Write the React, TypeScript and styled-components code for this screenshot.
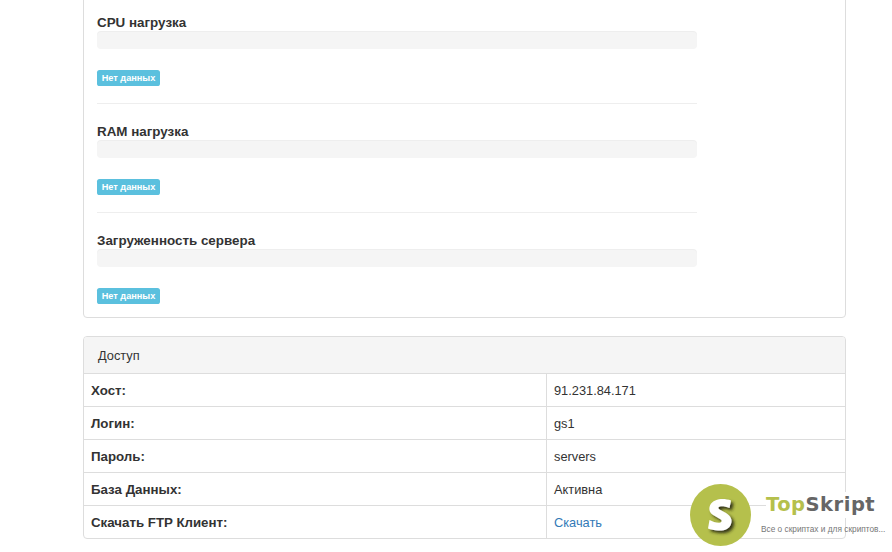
import React from "react";
import styled, { createGlobalStyle } from "styled-components";

const Global = createGlobalStyle`
  html, body { margin: 0; padding: 0; background: #fff; overflow: hidden; }
  body { font-family: "Liberation Sans", Arial, sans-serif; font-size: 12.8px; line-height: 20px; color: #333; }
  * { box-sizing: border-box; }
`;
const Page = styled.div`
  position: relative;
  width: 892px;
  height: 552px;
  overflow: hidden;
  padding: 0 46px 0 83px;
  display: flex;
  flex-direction: column;
  gap: 18px;
`;
const Panel = styled.section`
  background: #fff;
  border: 1px solid #ddd;
  border-radius: 4px;
`;
const LoadPanel = styled(Panel)`
  margin-top: -11px;
  padding: 22px 13px 13px;
  width: 763px;
`;
const Metric = styled.div`
  width: 600px;
`;
const MetricTitle = styled.h4`
  margin: 0;
  font-size: 13.4px;
  line-height: 22px;
  height: 19px;
  font-weight: 700;
  color: #333;
`;
const Track = styled.div`
  height: 18px;
  background: #f5f5f5;
  border-radius: 4px;
  box-shadow: inset 0 1px 1px rgba(0,0,0,.03);
  margin-bottom: 21px;
`;
const Badge = styled.span`
  display: block;
  width: 63px;
  height: 16px;
  background: #5bc0de;
  border-radius: 2.6px;
  color: #fff;
  font-size: 9.2px;
  line-height: 16px;
  font-weight: 700;
  text-align: center;
  white-space: nowrap;
`;
const Rule = styled.hr`
  border: 0;
  border-top: 1px solid #eee;
  margin: 17px 0 17px;
`;
const AccessPanel = styled(Panel)`
  width: 763px;
  overflow: hidden;
`;
const Heading = styled.header`
  height: 37px;
  padding: 0 14px;
  background: #f5f5f5;
  border-bottom: 1px solid #ddd;
  line-height: 37px;
  color: #333;
`;
const Row = styled.div`
  display: grid;
  grid-template-columns: 462px 1fr;
  height: 33px;
  border-bottom: 1px solid #ddd;
  &:last-child { height: 32px; border-bottom: 0; }
`;
const KeyCell = styled.div`
  padding: 0 7px;
  font-size: 13.3px;
  font-weight: 700;
  line-height: 34px;
`;
const ValueCell = styled.div`
  padding: 0 7px;
  border-left: 1px solid #ddd;
  line-height: 34px;
`;
const Link = styled.a`
  color: #337ab7;
  text-decoration: none;
`;
const Watermark = styled.div`
  position: absolute;
  left: 690px;
  top: 484px;
  width: 200px;
  height: 62px;
  display: flex;
`;
const Brand = styled.div`
  display: flex;
  flex-direction: column;
  margin-left: 15px;
  padding-top: 8px;
`;
const BrandName = styled.div`
  font-family: "DejaVu Sans", sans-serif;
  font-size: 19.5px;
  line-height: 26px;
  width: 112px;
  font-weight: 700;
  letter-spacing: 0.5px;
  color: #666;
  background: #fff;
  white-space: nowrap;
  & > b { color: #b5c04c; }
`;
const Tagline = styled.div`
  font-size: 8.3px;
  line-height: 12px;
  margin: 5px 0 0 -5px;
  color: #777;
  white-space: nowrap;
`;

const metrics = ["CPU нагрузка", "RAM нагрузка", "Загруженность сервера"];
const rows: [string, React.ReactNode][] = [
  ["Хост:", "91.231.84.171"],
  ["Логин:", "gs1"],
  ["Пароль:", "servers"],
  ["База Данных:", "Активна"],
  ["Скачать FTP Клиент:", <Link href="#">Скачать</Link>],
];

const App = () => (
  <Page>
    <Global />
    <LoadPanel>
      {metrics.map((m, i) => (
        <Metric key={m}>
          {i > 0 && <Rule />}
          <MetricTitle>{m}</MetricTitle>
          <Track />
          <Badge>Нет данных</Badge>
        </Metric>
      ))}
    </LoadPanel>
    <AccessPanel>
      <Heading>Доступ</Heading>
      {rows.map(([k, v]) => (
        <Row key={k}>
          <KeyCell>{k}</KeyCell>
          <ValueCell>{v}</ValueCell>
        </Row>
      ))}
    </AccessPanel>
    <Watermark>
      <svg width="61" height="62" viewBox="0 0 61 62">
        <defs>
          <filter id="s" x="-30%" y="-30%" width="170%" height="170%">
            <feDropShadow dx="2.5" dy="2.5" stdDeviation="1.6" floodColor="#23230c" floodOpacity="0.9" />
          </filter>
        </defs>
        <ellipse cx="30.5" cy="31" rx="30.5" ry="31" fill="#b5c04c" />
        <path filter="url(#s)" d="M41 16.5 L39.5 24 C36 22.5 32 22 30 22.5 C28 23 27.8 24.5 29.5 25.5 L36 29 C41 32 42.5 36 41 40 C39.5 45 34 47 28 46.5 C24.5 46.3 20.5 45.5 18 44.5 L19.5 36 C23 38 28 39.5 30.5 38.5 C32.3 37.8 32 36 30 35 L24 31.5 C19.5 29 18.5 25 20 21.5 C22 16.5 28 15 32.5 15 C35.5 15 38.5 15.5 41 16.5 Z" fill="#fff" />
      </svg>
      <Brand>
        <BrandName><b>Top</b>Skript</BrandName>
        <Tagline>Все о скриптах и для скриптов...</Tagline>
      </Brand>
    </Watermark>
  </Page>
);
export default App;
